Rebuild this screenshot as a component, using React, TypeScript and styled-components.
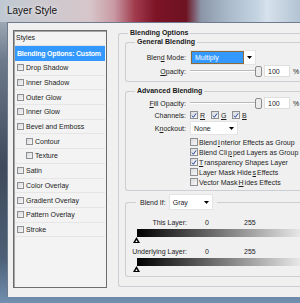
import React from 'react';
import styled, { createGlobalStyle } from 'styled-components';

const GlobalStyle = createGlobalStyle`
  html, body {
    margin: 0;
    padding: 0;
  }
  body {
    width: 300px;
    height: 303px;
    overflow: hidden;
    font-family: "Liberation Sans", Arial, sans-serif;
    color: #1c1c1c;
  }
`;

const Frame = styled.div`
  width: 300px;
  height: 303px;
  overflow: hidden;
  display: flex;
  flex-direction: column;
  background: linear-gradient(180deg, #b7c0ca 0%, #6d7a8a 20%, #3f4a5a 55%, #4d5f76 85%, #7290b0 100%);
`;

const TitleBar = styled.div`
  flex: none;
  height: 22px;
  display: flex;
  align-items: center;
  padding: 0 0 2px 7px;
  box-sizing: border-box;
  font-size: 10px;
  color: #111;
  text-shadow: 0 0 5px rgba(255, 255, 255, 0.95);
  background: linear-gradient(
    90deg,
    #bfc8d2 0%,
    #cdc9cf 15%,
    #d6c6ca 30%,
    #c99aa4 38%,
    #a03a4c 45%,
    #7c1426 52%,
    #6e1222 62%,
    #8a96a8 67%,
    #a9b9ca 76%,
    #c6d5e2 86%,
    #d6e2ec 89%,
    #b3c3d3 100%
  );
`;

const Client = styled.div`
  flex: none;
  width: 340px;
  height: 275px;
  margin-left: 7px;
  box-sizing: border-box;
  padding: 5px 0 0 5px;
  display: flex;
  align-items: flex-start;
  background: #f0f0f0;
  border-top: 1px solid #6e7c8e;
  border-left: 1px solid #6e7c8e;
`;

/* ---------- left style list ---------- */

const ListBox = styled.div`
  flex: none;
  margin-top: 2px;
  width: 94px;
  height: 258px;
  box-sizing: border-box;
  padding: 1px 1px 0 1px;
  display: flex;
  flex-direction: column;
  background: #f3f3f3;
  border: 1px solid #6c6c6c;
  box-shadow: inset 1px 1px 0 #a4a4a4;
  font-size: 7px;
`;

const ListHeader = styled.div`
  height: 14px;
  box-sizing: border-box;
  padding: 2px 0 0 1px;
  line-height: 8px;
  border-bottom: 1px solid #e2e2e2;
`;

const ListSelected = styled.div`
  height: 15px;
  display: flex;
  align-items: center;
  padding-left: 2px;
  background: #3399ff;
  color: #fff;
  font-weight: bold;
  letter-spacing: -0.2px;
`;

const ListRow = styled.div<{ $indent?: boolean }>`
  height: 14.7px;
  box-sizing: border-box;
  display: flex;
  align-items: center;
  gap: 2px;
  padding-left: ${(p) => (p.$indent ? 11 : 2)}px;
  border-bottom: 1px solid #e6e6e6;
`;

/* ---------- checkbox ---------- */

const CheckBox = styled.span<{ $size: number }>`
  flex: none;
  display: inline-flex;
  align-items: center;
  justify-content: center;
  width: ${(p) => p.$size}px;
  height: ${(p) => p.$size}px;
  box-sizing: border-box;
  border: 1px solid #8d8f92;
  background: linear-gradient(135deg, #d9dadc 0%, #f7f7f7 100%);
`;

function Check({ checked, size = 8 }: { checked?: boolean; size?: number }) {
  return (
    <CheckBox $size={size}>
      {checked && (
        <svg width={size - 1} height={size - 1} viewBox="0 0 8 8">
          <path d="M1.3 4.2 L3.2 6.4 L6.8 1.2" fill="none" stroke="#1f44a6" strokeWidth="1.3" />
        </svg>
      )}
    </CheckBox>
  );
}

/* ---------- group boxes (right edges run off the crop) ---------- */

const Group = styled.fieldset<{ $top?: number; $width: number }>`
  margin: ${(p) => p.$top ?? 0}px 0 0 0;
  padding: 0;
  min-width: 0;
  width: ${(p) => p.$width}px;
  box-sizing: border-box;
  border: 1px solid #cbcfd3;
  border-right: none;
  border-radius: 3px 0 0 3px;
`;

const Legend = styled.legend`
  margin-left: 9px;
  padding: 0 2px;
  font-size: 7px;
  line-height: 10px;
  font-weight: bold;
  color: #1a1a1a;
`;

const BlendIfLegend = styled.legend`
  margin-left: 10px;
  padding: 0 4px;
  display: flex;
  align-items: center;
  gap: 3px;
  font-size: 7px;
`;

const Main = styled.div`
  flex: none;
  margin-left: 11px;
`;

const OuterBody = styled.div`
  display: flex;
  flex-direction: column;
  padding: 0 0 9px 6px;
`;

const GroupBody = styled.div<{ $pt: number; $pb: number }>`
  display: flex;
  flex-direction: column;
  padding: ${(p) => p.$pt}px 0 ${(p) => p.$pb}px 0;
  font-size: 7px;
`;

const Row = styled.div<{ $h: number; $mt?: number }>`
  height: ${(p) => p.$h}px;
  margin-top: ${(p) => p.$mt ?? 0}px;
  display: flex;
  align-items: center;
`;

const Label = styled.span<{ $w?: number }>`
  flex: none;
  width: ${(p) => p.$w ?? 60}px;
  margin-right: 4px;
  text-align: right;
  white-space: nowrap;
`;

/* ---------- combos ---------- */

const Combo = styled.div<{ $w: number; $h: number }>`
  flex: none;
  width: ${(p) => p.$w}px;
  height: ${(p) => p.$h}px;
  box-sizing: border-box;
  display: flex;
  align-items: stretch;
  background: #fff;
  border: 1px solid #e4e4e4;
`;

const ComboValue = styled.span<{ $active?: boolean }>`
  flex: 1;
  display: flex;
  align-items: center;
  padding-left: 3px;
  box-sizing: border-box;
  ${(p) =>
    p.$active
      ? `background: #3399ff; color: #fff; border: 1px solid #8a6a36;`
      : ''}
`;

const ComboArrow = styled.span`
  flex: none;
  width: 11px;
  display: flex;
  align-items: center;
  justify-content: center;
`;

function Arrow() {
  return (
    <ComboArrow>
      <svg width="5" height="3" viewBox="0 0 5 3">
        <path d="M0 0 H5 L2.5 3 Z" fill="#000" />
      </svg>
    </ComboArrow>
  );
}

/* ---------- sliders ---------- */

const Slider = styled.div`
  flex: none;
  width: 72px;
  height: 12px;
  display: flex;
  align-items: center;
  justify-content: flex-end;
  background: linear-gradient(180deg, transparent 5px, #b9b9b9 5px, #b9b9b9 6px, #ffffff 6px, #ffffff 7px, transparent 7px);
`;

const NumBox = styled.span`
  flex: none;
  margin-left: 2px;
  width: 26px;
  height: 12px;
  box-sizing: border-box;
  padding-left: 3px;
  display: flex;
  align-items: center;
  background: #fff;
  border: 1px solid #dedede;
`;

const Percent = styled.span`
  margin-left: 3px;
`;

function OpacitySlider() {
  return (
    <>
      <Slider>
        <svg width="7" height="11" viewBox="0 0 7 11">
          <path d="M0.5 2 Q0.5 0.5 2 0.5 H5 Q6.5 0.5 6.5 2 V9 Q6.5 10.5 5 10.5 H2 Q0.5 10.5 0.5 9 Z" fill="#ececec" stroke="#8c8c8c" />
        </svg>
      </Slider>
      <NumBox>100</NumBox>
      <Percent>%</Percent>
    </>
  );
}

/* ---------- channels & options ---------- */

const Channel = styled.span`
  flex: none;
  width: 21px;
  display: flex;
  align-items: center;
  gap: 2px;
`;

const OptionList = styled.div`
  margin-top: 2px;
  display: flex;
  flex-direction: column;
`;

const OptionRow = styled.div`
  height: 10px;
  display: flex;
  align-items: center;
  gap: 1px;
  padding-left: 64px;
  white-space: nowrap;
`;

/* ---------- blend if ---------- */

const ValueZero = styled.span`
  width: 39px;
  margin-left: 14px;
`;

const GradientBar = styled.div`
  margin: 2px 0 0 11px;
  width: 180px;
  height: 8px;
  background: linear-gradient(90deg, #000 0%, #fff 100%);
`;

const ThumbRow = styled.div`
  height: 6px;
  padding-left: 7px;
  display: flex;
`;

function Thumb() {
  return (
    <ThumbRow>
      <svg width="7" height="6" viewBox="0 0 7 6">
        <path d="M3.5 0 L7 6 H0 Z" fill="#000" />
        <path d="M3.5 3 L4.6 5 H2.4 Z" fill="#fff" />
      </svg>
    </ThumbRow>
  );
}

const styles = [
  { name: 'Drop Shadow' },
  { name: 'Inner Shadow' },
  { name: 'Outer Glow' },
  { name: 'Inner Glow' },
  { name: 'Bevel and Emboss' },
  { name: 'Contour', indent: true },
  { name: 'Texture', indent: true },
  { name: 'Satin' },
  { name: 'Color Overlay' },
  { name: 'Gradient Overlay' },
  { name: 'Pattern Overlay' },
  { name: 'Stroke' },
];

export default function App() {
  return (
    <Frame>
      <GlobalStyle />
      <TitleBar>Layer Style</TitleBar>
      <Client>
        <ListBox>
          <ListHeader>Styles</ListHeader>
          <ListSelected>Blending Options: Custom</ListSelected>
          {styles.map((s) => (
            <ListRow key={s.name} $indent={s.indent}>
              <Check size={7} />
              {s.name}
            </ListRow>
          ))}
        </ListBox>

        <Main>
          <Group $width={214}>
            <Legend>Blending Options</Legend>
            <OuterBody>
              <Group $top={-1} $width={204}>
                <Legend>General Blending</Legend>
                <GroupBody $pt={2} $pb={4}>
                  <Row $h={16}>
                    <Label>
                      Blen<u>d</u> Mode:
                    </Label>
                    <Combo $w={66} $h={15}>
                      <ComboValue $active>Multiply</ComboValue>
                      <Arrow />
                    </Combo>
                  </Row>
                  <Row $h={12}>
                    <Label>
                      <u>O</u>pacity:
                    </Label>
                    <OpacitySlider />
                  </Row>
                </GroupBody>
              </Group>

              <Group $top={4} $width={204}>
                <Legend>Advanced Blending</Legend>
                <GroupBody $pt={1} $pb={3}>
                  <Row $h={12}>
                    <Label>
                      <u>F</u>ill Opacity:
                    </Label>
                    <OpacitySlider />
                  </Row>
                  <Row $h={12}>
                    <Label>Channels:</Label>
                    <Channel>
                      <Check checked />
                      <u>R</u>
                    </Channel>
                    <Channel>
                      <Check checked />
                      <u>G</u>
                    </Channel>
                    <Channel>
                      <Check checked />
                      <u>B</u>
                    </Channel>
                  </Row>
                  <Row $h={14}>
                    <Label>
                      K<u>n</u>ockout:
                    </Label>
                    <Combo $w={48} $h={14}>
                      <ComboValue>None</ComboValue>
                      <Arrow />
                    </Combo>
                  </Row>
                  <OptionList>
                    <OptionRow>
                      <Check />
                      Blend <u>I</u>nterior Effects as Group
                    </OptionRow>
                    <OptionRow>
                      <Check checked />
                      Blend Cli<u>p</u>ped Layers as Group
                    </OptionRow>
                    <OptionRow>
                      <Check checked />
                      <u>T</u>ransparency Shapes Layer
                    </OptionRow>
                    <OptionRow>
                      <Check />
                      Layer Mask Hide<u>s</u> Effects
                    </OptionRow>
                    <OptionRow>
                      <Check />
                      Vector Mask <u>H</u>ides Effects
                    </OptionRow>
                  </OptionList>
                </GroupBody>
              </Group>

              <Group $top={3} $width={204}>
                <BlendIfLegend>
                  Blend If:
                  <Combo $w={44} $h={16}>
                    <ComboValue>Gray</ComboValue>
                    <Arrow />
                  </Combo>
                </BlendIfLegend>
                <GroupBody $pt={0} $pb={4}>
                  <Row $h={10} $mt={7}>
                    <Label $w={61}>This Layer:</Label>
                    <ValueZero>0</ValueZero>
                    <span>255</span>
                  </Row>
                  <GradientBar />
                  <Thumb />
                  <Row $h={10} $mt={3}>
                    <Label $w={61}>Underlying Layer:</Label>
                    <ValueZero>0</ValueZero>
                    <span>255</span>
                  </Row>
                  <GradientBar />
                  <Thumb />
                </GroupBody>
              </Group>
            </OuterBody>
          </Group>
        </Main>
      </Client>
    </Frame>
  );
}
